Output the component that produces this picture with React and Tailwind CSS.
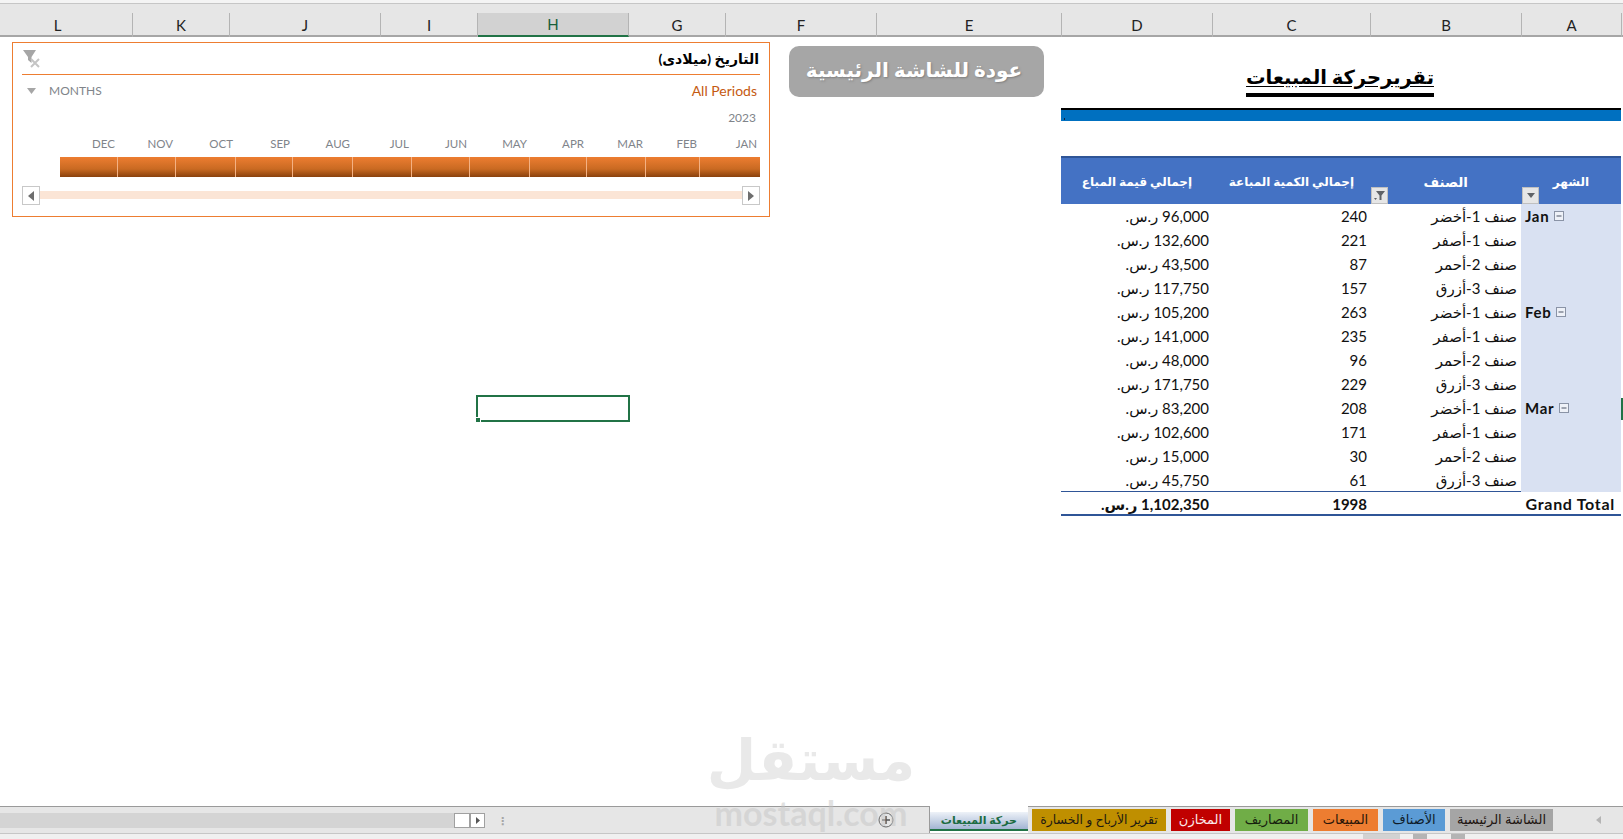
const cols = [
  ["L", 133, "pr-[17px]"], ["K", 97, ""], ["J", 151, ""], ["I", 97, ""], ["H", 151, "sel"], ["G", 97, ""],
  ["F", 151, ""], ["E", 185, ""], ["D", 151, ""], ["C", 158, ""], ["B", 151, ""], ["A", 100, ""],
];
const months = [["DEC", 58], ["NOV", 58], ["OCT", 60], ["SEP", 57], ["AUG", 60], ["JUL", 59], ["JUN", 58], ["MAY", 60], ["APR", 57], ["MAR", 59], ["FEB", 54], ["JAN", 60]];
const rows = [
  ["96,000", "240", "صنف 1-أخضر", "Jan"], ["132,600", "221", "صنف 1-أصفر"], ["43,500", "87", "صنف 2-أحمر"], ["117,750", "157", "صنف 3-أزرق"],
  ["105,200", "263", "صنف 1-أخضر", "Feb"], ["141,000", "235", "صنف 1-أصفر"], ["48,000", "96", "صنف 2-أحمر"], ["171,750", "229", "صنف 3-أزرق"],
  ["83,200", "208", "صنف 1-أخضر", "Mar"], ["102,600", "171", "صنف 1-أصفر"], ["15,000", "30", "صنف 2-أحمر"], ["45,750", "61", "صنف 3-أزرق"],
];
const tabs = [
  ["تقرير الأرباح و الخسارة", "w-[134px] bg-[#bf8f00] text-[#1f1a10] text-[12.5px]"],
  ["المخازن", "w-[59px] bg-[#c00000] text-[#fbeaea] text-[13px]"],
  ["المصاريف", "w-[73px] bg-[#70ad47] text-[#16210e] text-[13px]"],
  ["المبيعات", "w-[65px] bg-[#ed7d31] text-[#2a1608] text-[13px]"],
  ["الأصناف", "w-[62px] bg-[#5b9bd5] text-[#0e1b2a] text-[13px]"],
  ["الشاشة الرئيسية", "w-[103px] bg-[#a5a5a5] text-[#1d1410] text-[13px]"],
];
const font = "[font-family:Lato,'DejaVu_Sans',sans-serif]";

function Minus() {
  return (
    <svg width="10" height="10" viewBox="0 0 10 10" className="shrink-0">
      <rect x="0.5" y="0.5" width="9" height="9" fill="#eef1f8" stroke="#8a93a6" />
      <path d="M2.5 5h5" stroke="#4d5566" strokeWidth="1" />
    </svg>
  );
}

function ClearFilter() {
  return (
    <svg width="20" height="20" viewBox="0 0 20 20">
      <path d="M1 1h13L9.5 8v6L6 11V8z" fill="#a6a6a6" />
      <path d="M9 10l8 8M17 10l-8 8" stroke="#c4c4c4" strokeWidth="2" />
    </svg>
  );
}

export default function App() {
  return (
    <div className={`relative flex h-[839px] w-[1623px] flex-col overflow-hidden bg-white ${font}`}>
      {/* column header */}
      <div className="h-[3px] bg-[#f4f4f4]" />
      <div className="flex h-[34px] shrink-0 border-t border-b-2 border-t-[#c6c6c6] border-b-[#a6a6a6] bg-[#e6e6e6] pt-[9px]">
        {cols.map(([c, w, x]) => (
          <div
            key={c}
            style={{ width: w }}
            className={`-mb-[2px] flex shrink-0 items-center justify-center border-r border-[#b4b4b4] pt-[1px] text-[15px] text-[#222] ${x === "sel" ? "border-b-2 border-b-[#217346] bg-[#d2d2d2] text-[#17603a]" : ""} ${x !== "sel" ? x : ""}`}
          >
            {c}
          </div>
        ))}
      </div>

      {/* sheet */}
      <div className="relative flex min-h-0 flex-1 items-start pl-[12px]">
        {/* slicer */}
        <div className="mt-[5px] flex h-[175px] w-[758px] shrink-0 flex-col border border-[#ed7d31] px-[9px]">
          <div className="flex h-[32px] shrink-0 items-center justify-between border-b border-[#ed7d31] pr-[1px]">
            <ClearFilter />
            <span dir="rtl" className="text-[14px] font-bold text-black">التاريخ (ميلادى)</span>
          </div>
          <div className="mt-[7px] flex h-[18px] items-center justify-between pr-[3px]">
            <div className="flex items-center gap-[13px] pl-[5px] text-[12px] text-[#80848a]">
              <svg width="9" height="6" viewBox="0 0 9 6"><path d="M0 0h9L4.5 6z" fill="#a6a6a6" /></svg>
              MONTHS
            </div>
            <span className="-mt-[2px] text-[14px] text-[#c55a11]">All Periods</span>
          </div>
          <div className="mt-[10px] h-[16px] pr-[4px] text-right text-[12px] leading-[16px] text-[#80848a]">2023</div>
          <div className="mt-[10px] flex h-[16px] pl-[38px] text-[11.5px] leading-[16px] text-[#80848a]">
            {months.map(([m, w]) => (
              <div key={m} style={{ width: w }} className="shrink-0 pr-[3px] text-right">{m}</div>
            ))}
          </div>
          <div className="mt-[5px] flex h-[20px] pl-[38px]">
            {months.map(([m, w], i) => (
              <div
                key={m}
                style={{ width: w }}
                className={`h-full shrink-0 bg-gradient-to-b from-[#ed7d31] via-[#c96a22] via-60% to-[#8a410d] ${i < 11 ? "border-r border-[#f4b183]" : ""}`}
              />
            ))}
          </div>
          <div className="mt-[9px] flex h-[19px] items-start">
            <div className="flex h-[19px] w-[18px] shrink-0 items-center justify-center border border-[#c8c8c8] bg-white">
              <svg width="6" height="10" viewBox="0 0 6 10"><path d="M6 0v10L0 5z" fill="#6e6e6e" /></svg>
            </div>
            <div className="mt-[5px] h-[8px] flex-1 bg-[#fbe5d6]" />
            <div className="flex h-[19px] w-[18px] shrink-0 items-center justify-center border border-[#c8c8c8] bg-white">
              <svg width="6" height="10" viewBox="0 0 6 10"><path d="M0 0v10l6-5z" fill="#6e6e6e" /></svg>
            </div>
          </div>
        </div>

        {/* back button */}
        <div className="ml-[19px] mt-[9px] flex h-[51px] w-[255px] shrink-0 items-center justify-center rounded-[10px] bg-[#a6a6a6] pb-[6px] pr-[5px]">
          <span dir="rtl" className="text-[20px] font-bold text-white [text-shadow:1px_1px_2px_#7f7f7f]">عودة للشاشة الرئيسية</span>
        </div>

        {/* report */}
        <div className="ml-[17px] w-[560px] shrink-0">
          <div className="flex h-[71px] flex-col items-center pr-[2px]">
            <div dir="rtl" className="mt-[23px] border-b-[4px] border-black text-[19.5px] font-bold leading-[33px] text-black underline underline-offset-2">
              تقريرحركة المبيعات
            </div>
          </div>
          <div className="h-[13px] border-t-2 border-black bg-[#0070c0] pl-[3px] pt-[8px]">
            <div className="h-[2px] w-[1px] bg-[#10243e]" />
          </div>
          <div className="h-[35px]" />
          {/* header */}
          <div className="flex h-[48px] border-t-2 border-[#2f5597] bg-[#4472c4] text-[12px] font-bold text-white">
            <div dir="rtl" className="flex w-[151px] items-start pr-[20px] pt-[15px]">إجمالي قيمة المباع</div>
            <div className="flex w-[158px] items-start justify-end pr-[16px] pt-[15px]">
              <span dir="rtl">إجمالي الكمية المباعة</span>
            </div>
            <div className="relative flex w-[151px] items-start justify-end pr-[53px] pt-[14px]">
              <span dir="rtl" className="text-[13.5px]">الصنف</span>
              <div className="absolute bottom-0 left-[1px] flex h-[17px] w-[17px] items-center justify-center border border-[#c0c0c0] bg-[#e6e6e6]">
                <svg width="11" height="10" viewBox="0 0 11 10"><path d="M2 0h9L7.5 4.5V9H5.5V4.5z" fill="#5f6266" /><path d="M0 7h3L1.5 9z" fill="#5f6266" /></svg>
              </div>
            </div>
            <div className="relative flex w-[100px] items-start justify-end pr-[32px] pt-[15px]">
              <span dir="rtl">الشهر</span>
              <div className="absolute bottom-0 left-[1px] flex h-[17px] w-[17px] items-center justify-center border border-[#c0c0c0] bg-[#e6e6e6]">
                <svg width="8" height="5" viewBox="0 0 8 5"><path d="M0 0h8L4 5z" fill="#5f6266" /></svg>
              </div>
            </div>
          </div>
          {/* rows */}
          {rows.map(([v, q, item, m], i) => (
            <div key={i} className="flex h-[24px] text-[15px] leading-[24px] text-[#111]">
              <div dir="rtl" className="w-[151px] pr-[3px]"><span dir="ltr" className="inline-block">{v}</span> <span className="text-[15px]">ر.س.</span></div>
              <div className="w-[158px] pr-[3px] text-right">{q}</div>
              <div dir="rtl" className="w-[151px] pr-[4px] text-[15px]">{item}</div>
              <div className="flex w-[100px] items-center gap-[5px] bg-[#d9e1f2] pl-[4px] text-[15px] font-bold tracking-[0.7px]">
                {m && <>{m}<Minus /></>}
              </div>
            </div>
          ))}
          <div className="-mt-[1px] flex h-[25px] border-t border-b-2 border-t-[#2f5597] border-b-[#2f5597] text-[15px] font-bold leading-[24px] text-[#111]">
            <div dir="rtl" className="w-[151px] pr-[3px]"><span dir="ltr" className="inline-block">1,102,350</span> <span className="text-[15px]">ر.س.</span></div>
            <div className="w-[158px] pr-[3px] text-right">1998</div>
            <div className="w-[251px] pr-[6px] text-right text-[16px] tracking-[0.7px]">Grand Total</div>
          </div>
        </div>

        {/* selected cell */}
        <div className="absolute left-[476px] top-[358px] h-[27px] w-[154px] border-2 border-[#217346]">
          <div className="absolute -bottom-[3px] -left-[3px] h-[6px] w-[6px] border border-white bg-[#217346]" />
        </div>
        {/* selected row marker */}
        <div className="absolute right-0 top-[361px] h-[22px] w-[2px] bg-[#217346]" />
      </div>

      {/* sheet tabs bar */}
      <div className="flex h-[28px] shrink-0 items-stretch border-b border-[#c6c6c6] bg-white">
        <div className="flex w-[930px] shrink-0 items-center border-t border-r border-[#9a9a9a] bg-[#e6e6e6]">
          <div className="h-[15px] w-[454px] bg-[#d4d4d4]" />
          <div className="h-[15px] w-[16px] border border-[#a0a0a0] bg-white" />
          <div className="flex h-[15px] w-[15px] items-center justify-center border border-[#a0a0a0] bg-white">
            <svg width="4" height="7" viewBox="0 0 4 7"><path d="M0 0v7l4-3.5z" fill="#555" /></svg>
          </div>
          <div className="ml-[12px] text-[11px] font-bold leading-none text-[#a6a6a6]">⋮</div>
          <svg width="16" height="16" viewBox="0 0 16 16" className="ml-[370px]">
            <circle cx="8" cy="8" r="7" fill="none" stroke="#666" />
            <path d="M8 4v8M4 8h8" stroke="#555" strokeWidth="1.5" />
          </svg>
        </div>
        <div className="flex w-[98px] shrink-0 flex-col bg-white pt-[6px]">
          <div className="flex h-[17px] items-center justify-end bg-gradient-to-b from-[#eef2f8] to-[#a3b5d3] pr-[11px]">
            <span dir="rtl" className="text-[11px] font-bold text-[#1b6b42]">حركة المبيعات</span>
          </div>
          <div className="h-[2px] bg-[#217346]" />
        </div>
        <div className="flex flex-1 items-start gap-[5px] border-t border-[#9a9a9a] bg-[#e6e6e6] pl-[4px] pt-[2px]">
          {tabs.map(([t, c]) => (
            <div key={t} className={`flex h-[22px] shrink-0 items-center justify-center ${c}`}>
              <span dir="rtl">{t}</span>
            </div>
          ))}
          <svg width="5" height="8" viewBox="0 0 5 8" className="ml-[38px] mt-[7px]"><path d="M5 0v8L0 4z" fill="#b4b4b4" /></svg>
        </div>
      </div>

      {/* status strip */}
      <div className="flex h-[5px] shrink-0 items-stretch justify-end bg-[#f0f0f0] pr-[158px]">
        <div className="mr-[13px] w-[37px] bg-[#d2d2d2]" />
        <div className="mr-[24px] w-[14px] bg-[#b4b4b4]" />
        <div className="w-[14px] bg-[#b4b4b4]" />
      </div>

      {/* watermark */}
      <div className="pointer-events-none absolute left-[700px] top-[718px] flex w-[222px] flex-col items-center">
        <div dir="rtl" className="text-[57px] font-bold leading-[80px] text-[#e9e9e9]">مستقل</div>
        <div className="-mt-[2px] text-[34px] font-bold leading-[34px] text-[#c4c4c4]/50">mostaql.com</div>
      </div>
    </div>
  );
}
